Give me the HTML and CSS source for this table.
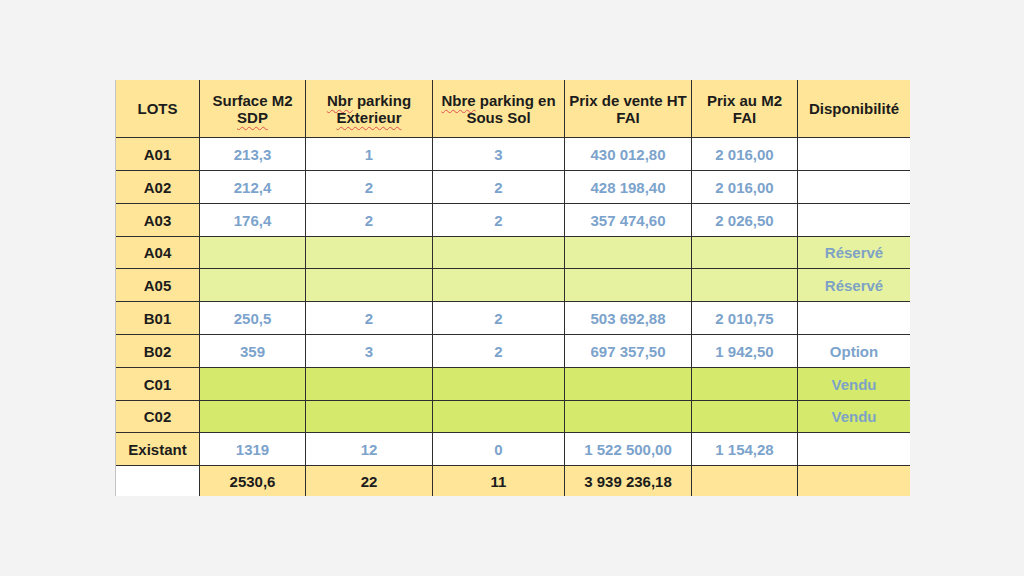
FILE: index.html
```html
<!DOCTYPE html>
<html lang="fr">
<head>
<meta charset="utf-8">
<title>Lots</title>
<link rel="stylesheet" href="styles.css">
</head>
<body>
<div class="page">
  <div class="sheet">
    <div class="cell hd"><div class="tx">LOTS</div></div>
    <div class="cell hd"><div class="tx">Surface M2<br><span class="spell">SDP</span></div></div>
    <div class="cell hd"><div class="tx"><span class="spell">Nbr</span> parking<br><span class="spell">Exterieur</span></div></div>
    <div class="cell hd"><div class="tx"><span class="spell">Nbre</span> parking en<br>Sous Sol</div></div>
    <div class="cell hd"><div class="tx">Prix de vente HT<br>FAI</div></div>
    <div class="cell hd"><div class="tx">Prix au M2<br>FAI</div></div>
    <div class="cell hd"><div class="tx">Disponibilité</div></div>

    <div class="cell lot">A01</div>
    <div class="cell val">213,3</div><div class="cell val">1</div><div class="cell val">3</div><div class="cell val">430 012,80</div><div class="cell val">2 016,00</div><div class="cell val"></div>

    <div class="cell lot">A02</div>
    <div class="cell val">212,4</div><div class="cell val">2</div><div class="cell val">2</div><div class="cell val">428 198,40</div><div class="cell val">2 016,00</div><div class="cell val"></div>

    <div class="cell lot">A03</div>
    <div class="cell val">176,4</div><div class="cell val">2</div><div class="cell val">2</div><div class="cell val">357 474,60</div><div class="cell val">2 026,50</div><div class="cell val"></div>

    <div class="cell lot">A04</div>
    <div class="cell res"></div><div class="cell res"></div><div class="cell res"></div><div class="cell res"></div><div class="cell res"></div><div class="cell res">Réservé</div>

    <div class="cell lot">A05</div>
    <div class="cell res"></div><div class="cell res"></div><div class="cell res"></div><div class="cell res"></div><div class="cell res"></div><div class="cell res">Réservé</div>

    <div class="cell lot">B01</div>
    <div class="cell val">250,5</div><div class="cell val">2</div><div class="cell val">2</div><div class="cell val">503 692,88</div><div class="cell val">2 010,75</div><div class="cell val"></div>

    <div class="cell lot">B02</div>
    <div class="cell val">359</div><div class="cell val">3</div><div class="cell val">2</div><div class="cell val">697 357,50</div><div class="cell val">1 942,50</div><div class="cell val">Option</div>

    <div class="cell lot">C01</div>
    <div class="cell sold"></div><div class="cell sold"></div><div class="cell sold"></div><div class="cell sold"></div><div class="cell sold"></div><div class="cell sold">Vendu</div>

    <div class="cell lot">C02</div>
    <div class="cell sold"></div><div class="cell sold"></div><div class="cell sold"></div><div class="cell sold"></div><div class="cell sold"></div><div class="cell sold">Vendu</div>

    <div class="cell lot">Existant</div>
    <div class="cell val">1319</div><div class="cell val">12</div><div class="cell val">0</div><div class="cell val">1 522 500,00</div><div class="cell val">1 154,28</div><div class="cell val"></div>

    <div class="cell blank"></div>
    <div class="cell tot">2530,6</div><div class="cell tot">22</div><div class="cell tot">11</div><div class="cell tot">3 939 236,18</div><div class="cell tot"></div><div class="cell tot"></div>
  </div>
</div>
</body>
</html>
```
FILE: styles.css
```css
html, body {
  margin: 0;
  padding: 0;
}

body {
  background: #f3f3f3;
  font-family: "Liberation Sans", Arial, sans-serif;
  font-size: 15px;
  font-weight: bold;
}

.page {
  padding: 80px 0 0 115px;
}

.sheet {
  display: grid;
  grid-template-columns: 83px 105px 126px 131px 126px 105px 112px;
  grid-template-rows: 57px 32px 32px 32px 31px 32px 32px 32px 32px 31px 32px 30px;
  gap: 1px;
  width: 794px;
  height: 416px;
  background: #2e2e2e;
  border-left: 1px solid #c4c4c4;
  overflow: hidden;
}

.cell {
  display: flex;
  align-items: center;
  justify-content: center;
  text-align: center;
  line-height: 17px;
  white-space: nowrap;
  background: #ffffff;
  color: #7ca3cc;
}

.tx {
  text-align: center;
}

.hd {
  background: #fee597;
  color: #1c1c1c;
}

.lot {
  background: #fee597;
  color: #1c1c1c;
}

.val {
  background: #ffffff;
}

.res {
  background: #e7f2a0;
  color: #7ea2c6;
}

.sold {
  background: #d5ea6c;
  color: #7ea2c6;
}

.blank {
  background: #ffffff;
}

.tot {
  background: #fee597;
  color: #1c1c1c;
}

.spell {
  text-decoration: underline wavy #e05050;
  text-decoration-thickness: 1px;
  text-underline-offset: 3px;
}
```
